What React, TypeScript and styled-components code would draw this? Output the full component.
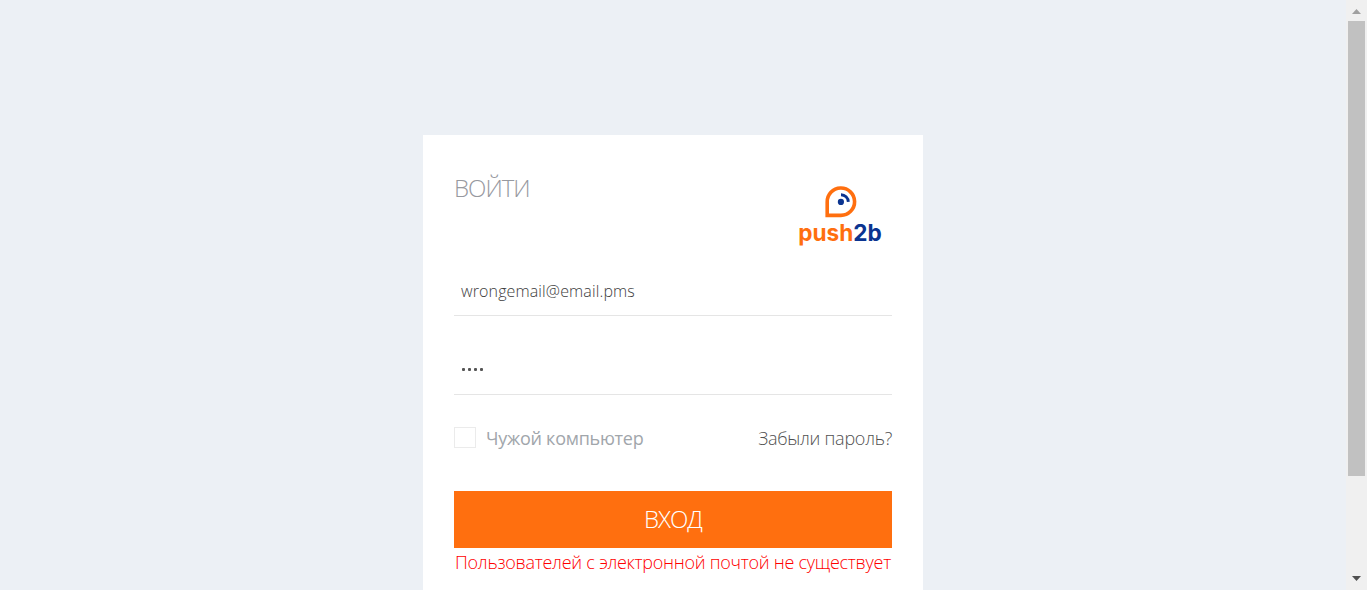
import React from 'react';
import styled, { createGlobalStyle } from 'styled-components';

const GlobalStyle = createGlobalStyle`
  * { box-sizing: border-box; }
  body {
    margin: 0;
    overflow: hidden;
    background: #ecf0f5;
    font-family: 'Open Sans', 'Noto Sans', sans-serif;
    font-weight: 300;
  }
  button, input { font: inherit; }
`;

const Page = styled.div`
  display: flex;
  height: 590px;
  overflow: hidden;
`;

const Main = styled.main`
  flex: 1;
  display: flex;
  justify-content: center;
  align-items: flex-start;
  padding-top: 135px;
`;

const Card = styled.form`
  width: 500px;
  height: 600px;
  padding: 35px 31px;
  background: #fff;
`;

const Header = styled.header`
  display: flex;
  justify-content: space-between;
  height: 99px;
`;

const Title = styled.h1`
  margin: 0;
  font-size: 24px;
  line-height: 35px;
  font-weight: 300;
  letter-spacing: -1px;
  color: #97999f;
`;

const Logo = styled.svg`
  width: 104px;
  height: 80px;
  margin-top: 5px;
`;

const Field = styled.div<{ $height: number; $top: number }>`
  height: ${(p) => p.$height}px;
  padding: ${(p) => p.$top}px 7px 0;
  border-bottom: 1px solid #e5e5e5;
  font-size: 16px;
  line-height: 24px;
  letter-spacing: 0.13px;
  color: #3c3c3c;
`;

const Dots = styled.div`
  display: flex;
  gap: 3px;
  padding-left: 1px;
`;

const Dot = styled.i`
  width: 3px;
  height: 3px;
  border-radius: 1px;
  background: #555;
`;

const Options = styled.div`
  display: flex;
  align-items: center;
  justify-content: space-between;
  height: 24px;
  margin-top: 31px;
  font-size: 18px;
  line-height: 24px;
  letter-spacing: -0.26px;
`;

const Remember = styled.label`
  display: flex;
  align-items: flex-start;
  gap: 10px;
  font-weight: 400;
  letter-spacing: -0.26px;
  color: #a1a6ab;
`;

const Box = styled.span`
  width: 22px;
  height: 21px;
  margin-top: 1px;
  border: 1px solid #ebebeb;
`;

const Forgot = styled.a`
  color: #505050;
`;

const Submit = styled.button`
  display: block;
  width: 100%;
  height: 57px;
  margin-top: 41px;
  padding: 0 0 2px;
  border: 0;
  background: #ff6f0f;
  color: #fff;
  font-size: 24px;
  letter-spacing: -1px;
`;

const ErrorText = styled.p`
  margin: 1px 0 0 1px;
  font-size: 18px;
  line-height: 26px;
  letter-spacing: -0.27px;
  white-space: nowrap;
  color: #ff0000;
`;

const ScrollTrack = styled.div`
  display: flex;
  flex-direction: column;
  align-items: center;
  width: 21px;
  padding: 9px 0;
  background: #f0f0f0;
`;

const Arrow = styled.svg`
  width: 9px;
  height: 5px;
`;

const Thumb = styled.div`
  width: 17px;
  height: 455px;
  margin: 7px 0 auto;
  background: #c1c1c1;
`;

export default function App() {
  return (
    <Page>
      <GlobalStyle />
      <Main>
        <Card>
          <Header>
            <Title>ВОЙТИ</Title>
            <Logo viewBox="0 0 104 80">
              <path d="M39.2 40.4V27.2A13.7 13.7 0 1 1 52.9 40.4Z" fill="none" stroke="#ff6f0f" strokeWidth="3.6" />
              <circle cx="52.9" cy="26.9" r="3.1" fill="#0b3490" />
              <path d="M53 19.7A7.4 7.4 0 0 1 60.3 26.9" fill="none" stroke="#0b3490" strokeWidth="2.9" />
              <text x="10.2" y="66" fontFamily="Inter, 'Liberation Sans', sans-serif" fontWeight="700" fontSize="22.5" textLength="83.5" lengthAdjust="spacingAndGlyphs" fill="#ff6f0f">
                push<tspan fill="#0b3490">2b</tspan>
              </text>
            </Logo>
          </Header>
          <Field $height={47} $top={10}>wrongemail@email.pms</Field>
          <Field $height={79} $top={52}>
            <Dots><Dot /><Dot /><Dot /><Dot /></Dots>
          </Field>
          <Options>
            <Remember><Box />Чужой компьютер</Remember>
            <Forgot>Забыли пароль?</Forgot>
          </Options>
          <Submit type="button">ВХОД</Submit>
          <ErrorText>Пользователей с электронной почтой не существует</ErrorText>
        </Card>
      </Main>
      <ScrollTrack>
        <Arrow viewBox="0 0 9 5"><path d="M0 5L4.5 0L9 5Z" fill="#a0a0a0" /></Arrow>
        <Thumb />
        <Arrow viewBox="0 0 9 5"><path d="M0 0H9L4.5 5Z" fill="#505050" /></Arrow>
      </ScrollTrack>
    </Page>
  );
}
